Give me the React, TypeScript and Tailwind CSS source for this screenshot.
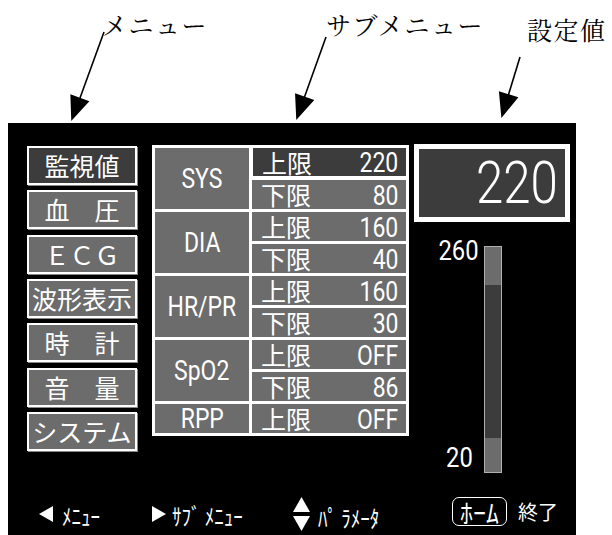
import React from "react";

const groups: { label: string; rows: [string, string][] }[] = [
  { label: "SYS", rows: [["上限", "220"], ["下限", "80"]] },
  { label: "DIA", rows: [["上限", "160"], ["下限", "40"]] },
  { label: "HR/PR", rows: [["上限", "160"], ["下限", "30"]] },
  { label: "SpO2", rows: [["上限", "OFF"], ["下限", "86"]] },
  { label: "RPP", rows: [["上限", "OFF"]] },
];

const menus = ["監視値", "血　圧", "ＥＣＧ", "波形表示", "時　計", "音　量", "システム"];

function Arrows() {
  return (
    <svg className="absolute left-0 top-0" width="612" height="123" viewBox="0 0 612 123">
      <g stroke="#000" strokeWidth="1.6" fill="#000">
        <line x1="104" y1="32" x2="80" y2="98" />
        <polygon points="72,119 88,101.5 71.2,95.3" />
        <line x1="326" y1="37" x2="304.4" y2="97.3" />
        <polygon points="297,118 312.9,100.3 295.9,94.3" />
        <line x1="520" y1="57" x2="508.4" y2="95" />
        <polygon points="502,116 517,97.6 499.8,92.4" />
      </g>
    </svg>
  );
}

export default function App() {
  let selDone = false;
  return (
    <div className="w-[612px] h-[535px] bg-white overflow-hidden flex flex-col">
      <div className="relative h-[123px] shrink-0 font-['Noto_Serif_CJK_JP','Noto_Sans_CJK_JP',serif] text-[25px] leading-none tracking-[1.5px] text-black">
        <Arrows />
        <div className="absolute left-[102px] top-[12px]">メニュー</div>
        <div className="absolute left-[326px] top-[12px]">サブメニュー</div>
        <div className="absolute left-[527px] top-[17px]">設定値</div>
      </div>
      <div className="ml-[8px] w-[568px] h-[412px] bg-black flex flex-col text-white">
        <div className="flex items-start h-[370px] pt-[21px] pl-[19px]">
          {/* menu */}
          <div className="mt-[2px] w-[110px] flex flex-col gap-[5.33px] font-['Noto_Sans_CJK_JP',sans-serif] text-[25px] leading-none">
            {menus.map((m, i) => (
              <div
                key={m}
                className={
                  "h-[39px] border-2 border-white flex items-center justify-center shadow-[1px_1px_0_#888] " +
                  (i === 0 ? "bg-[#3c3c3c]" : "bg-[#6c6c6c]")
                }
              >
                {m}
              </div>
            ))}
          </div>
          {/* table */}
          <div className="mt-[1px] ml-[15px] border-[3px] border-white bg-white grid grid-cols-[94px_154px] grid-rows-[repeat(9,29px)] gap-[3px]">
            {groups.map((g) => (
              <React.Fragment key={g.label}>
                <div
                  className={
                    "bg-[#6c6c6c] flex items-center justify-center font-['Roboto',sans-serif] text-[28px] leading-none " +
                    (g.rows.length === 2 ? "row-span-2" : "")
                  }
                >
                  <span className="inline-block scale-x-[0.82] origin-center">{g.label}</span>
                </div>
                {g.rows.map(([k, v], j) => {
                  const sel = !selDone;
                  selDone = true;
                  return (
                    <div
                      key={g.label + j}
                      className={
                        "col-start-2 flex items-center justify-between pl-[9px] pr-[8px] " +
                        (sel ? "bg-[#3c3c3c] border-l border-b border-white" : "bg-[#6c6c6c]")
                      }
                    >
                      <span className="font-['Noto_Sans_CJK_JP',sans-serif] text-[25px] leading-none">{k}</span>
                      <span className="inline-block mt-[2px] scale-x-[0.82] origin-right font-['Roboto',sans-serif] text-[28px] leading-none">{v}</span>
                    </div>
                  );
                })}
              </React.Fragment>
            ))}
          </div>
          {/* right column */}
          <div className="ml-[5px] w-[156px] flex flex-col">
            <div className="h-[78px] border-[5px] border-white bg-[#3c3c3c] flex items-center justify-end pr-[7px] font-['Roboto',sans-serif] text-[60px] leading-none font-light">
              <span className="inline-block scale-x-[0.82] origin-right">220</span>
            </div>
            <div className="mt-[24px] flex">
              <div className="w-[66px] h-[227px] flex flex-col justify-between items-end font-['Roboto',sans-serif] text-[28px] leading-none">
                <div className="-mt-[9px] pr-[2px] inline-block scale-x-[0.85] origin-right">260</div>
                <div className="mb-[1px] pr-[9px] inline-block scale-x-[0.85] origin-right">20</div>
              </div>
              <div className="ml-[4px] w-[18px] h-[227px] border border-[#b0b0b0] flex flex-col">
                <div className="h-[38px] bg-[#6c6c6c]" />
                <div className="flex-1 bg-[#3c3c3c]" />
                <div className="h-[34px] bg-[#6c6c6c]" />
              </div>
            </div>
          </div>
        </div>
        {/* bottom bar */}
        <div className="h-[42px] flex items-start pl-[31px] font-['Noto_Sans_CJK_JP',sans-serif] text-[19px] leading-none">
          <div className="w-[113px] flex items-center mt-[13px] h-[16px]">
            <svg width="14" height="16" viewBox="0 0 14 16">
              <polygon points="0,8 14,0 14,16" fill="#fff" />
            </svg>
            <span className="ml-[9px] inline-block scale-y-[1.2]">ﾒﾆｭｰ</span>
          </div>
          <div className="w-[141px] flex items-center mt-[13px] h-[16px]">
            <svg width="14" height="16" viewBox="0 0 14 16">
              <polygon points="0,0 14,8 0,16" fill="#fff" />
            </svg>
            <span className="ml-[6px] inline-block scale-y-[1.2]">ｻﾌﾞ ﾒﾆｭｰ</span>
          </div>
          <div className="w-[159px] flex items-center mt-[4px] h-[34px]">
            <svg width="17" height="34" viewBox="0 0 17 34">
              <polygon points="8.5,0 17,15 0,15" fill="#fff" />
              <polygon points="0,19 17,19 8.5,34" fill="#fff" />
            </svg>
            <span className="ml-[8px] mt-[4px] inline-block scale-y-[1.2]">ﾊﾟ ﾗﾒｰﾀ</span>
          </div>
          <div className="mt-[4px] w-[55px] h-[29px] border border-white rounded-[7px] flex items-center justify-center text-[26px]">
            ﾎｰﾑ
          </div>
          <div className="ml-[11px] mt-[9px] text-[20px]">終了</div>
        </div>
      </div>
    </div>
  );
}
